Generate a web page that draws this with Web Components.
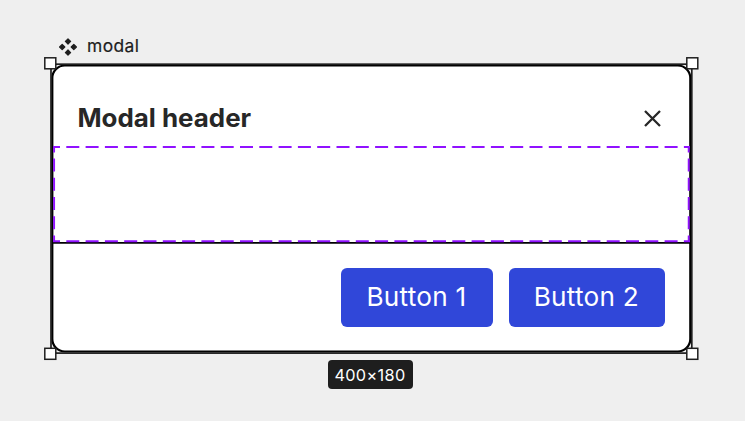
<!DOCTYPE html>
<html lang="en"><head><meta charset="utf-8"><title>modal</title>
<style>body{margin:0;background:#efefef;font-family:Inter,"Liberation Sans",sans-serif}</style></head>
<body>
<design-canvas>
  <component-label slot="label">modal</component-label>
  <modal-card heading="Modal header">
    <modal-button style="--w:151.6px">Button 1</modal-button>
    <modal-button style="--w:156.3px">Button 2</modal-button>
  </modal-card>
  <size-badge slot="size">400×180</size-badge>
</design-canvas>
<script>
const define = (name, html) => customElements.define(name, class extends HTMLElement {
  constructor() {
    super();
    this.attachShadow({mode: 'open'}).innerHTML = html;
  }
  connectedCallback() {
    const h = this.shadowRoot.querySelector('h1');
    if (h) h.textContent = this.getAttribute('heading');
  }
});

define('component-label', `<style>
:host{display:flex;align-items:center;gap:10.5px;height:24px;font-size:17.4px;line-height:24px;color:#1e1e1e;letter-spacing:.4px;-webkit-text-stroke:.2px #1e1e1e}
svg{display:block;margin-top:2px}
</style><svg width="18" height="18" viewBox="0 0 18 18" fill="#1e1e1e" stroke="#1e1e1e" stroke-width="1.2" stroke-linejoin="round"><path d="M9 .8l2.6 2.6L9 6 6.4 3.4zM3.2 6.4L5.8 9l-2.6 2.6L.6 9zM14.8 6.4L17.4 9l-2.6 2.6L12.2 9zM9 12l2.6 2.6L9 17.2l-2.6-2.6z"/></svg><span><slot></slot></span>`);

define('modal-button', `<style>
:host{display:block}
button{display:block;width:var(--w);height:59px;padding:0 1px 2px 0;border:0;border-radius:6px;background:#3047d9;color:#fff;font:400 26.2px/57px Inter,"Liberation Sans",sans-serif;letter-spacing:.25px;text-align:center;white-space:nowrap}
</style><button><slot></slot></button>`);

define('modal-card', `<style>
:host{display:flex;flex-direction:column;width:640px;height:289px;background:#fff;border-radius:13px}
header{box-sizing:border-box;height:83px;padding:27px 31px 0 26px;display:flex;justify-content:space-between;align-items:flex-start}
h1{margin:0;font-size:25.9px;line-height:54px;font-weight:700;letter-spacing:0;color:#272727}
header svg{margin-top:19px}
main{height:95px}
footer{flex:1;display:flex;justify-content:flex-end;gap:16px;padding:25.5px 26.5px 0}
</style><header><h1></h1><svg width="17" height="17" viewBox="0 0 17 17" fill="none" stroke="#272727" stroke-width="2.3"><path d="M1 1l15 15M16 1L1 16"/></svg></header><main></main><footer><slot></slot></footer>`);

define('size-badge', `<style>
:host{display:block;box-sizing:border-box;width:85px;height:29px;padding-right:1px;border-radius:4px;background:#1e1e1e;color:#fff;font-size:16.3px;line-height:31px;text-align:center;letter-spacing:.35px}
</style><slot></slot>`);

define('selection-outline', `<style>
:host{display:block}svg{display:block}
</style><svg width="745" height="421" viewBox="0 0 745 421" fill="none">
<rect x="52.3" y="65.5" width="638" height="286" rx="12.5" stroke="#000" stroke-width="2.2"/>
<path d="M53 242.9H690" stroke="#000" stroke-width="1.7"/>
<path d="M53 147.1H690M53 241.2H690" stroke="#9012ff" stroke-width="2" stroke-dasharray="13 6.3" stroke-dashoffset="6"/>
<path d="M54.1 146.2V242M688.7 146.2V242" stroke="#9012ff" stroke-width="1.9" stroke-dasharray="13 6.2" stroke-dashoffset="6.8"/>
<rect x="51" y="64.2" width="640.8" height="288.9" stroke="#1e1e1e" stroke-width="1.7"/>
<g fill="#fff" stroke="#1e1e1e" stroke-width="1.5"><rect x="44.8" y="57.8" width="11" height="11"/><rect x="686.8" y="57.8" width="11" height="11"/><rect x="44.8" y="348.3" width="11" height="11"/><rect x="686.8" y="348.3" width="11" height="11"/></g></svg>`);

define('design-canvas', `<style>
:host{display:flex;flex-direction:column;position:relative;box-sizing:border-box;width:745px;height:421px;padding:34px 0 0 51.5px;overflow:hidden;background:#efefef}
.label{padding-left:7px;height:30px}
.size{display:flex;justify-content:center;width:638px;padding-top:7px}
selection-outline{position:absolute;inset:0;pointer-events:none}
</style><div class="label"><slot name="label"></slot></div><slot></slot><div class="size"><slot name="size"></slot></div><selection-outline></selection-outline>`);
</script>
</body></html>
